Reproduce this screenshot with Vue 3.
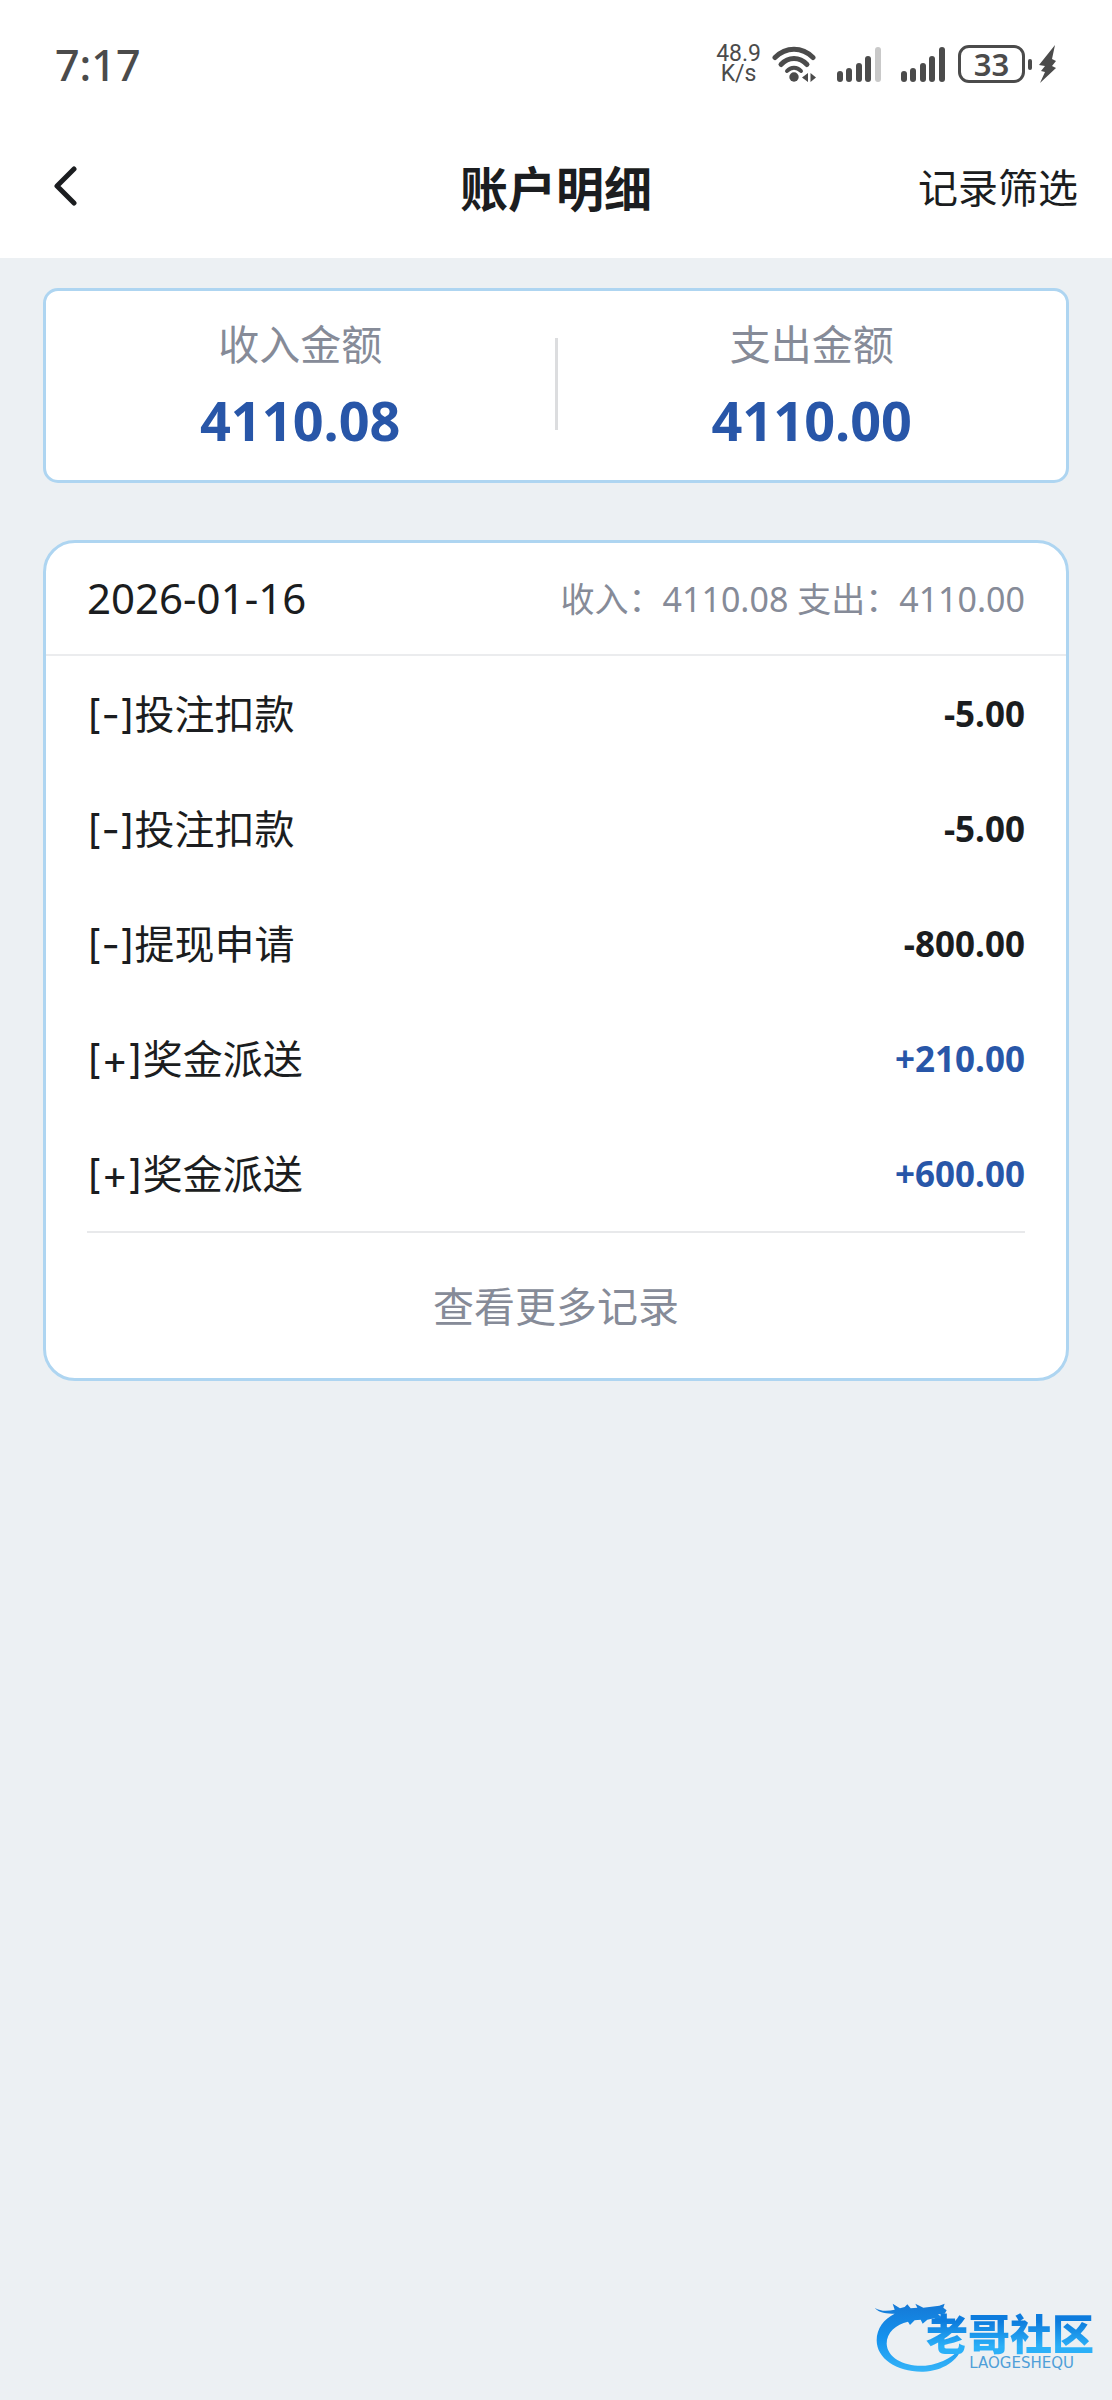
<script setup>
import { ref } from 'vue'

const totals = [
  { label: '收入金额', value: '4110.08' },
  { label: '支出金额', value: '4110.00' },
]

const day = ref({
  date: '2026-01-16',
  income: '4110.08',
  expense: '4110.00',
  records: [
    { id: 1, label: '[-]投注扣款', amount: '-5.00' },
    { id: 2, label: '[-]投注扣款', amount: '-5.00' },
    { id: 3, label: '[-]提现申请', amount: '-800.00' },
    { id: 4, label: '[+]奖金派送', amount: '+210.00' },
    { id: 5, label: '[+]奖金派送', amount: '+600.00' },
  ],
})

const bars = [
  { x: 0, y: 24 },
  { x: 9, y: 21 },
  { x: 19, y: 16 },
  { x: 28, y: 9 },
  { x: 38, y: 0 },
]
const signals = [4, 5]
</script>

<template>
  <div class="page">
    <header class="top">
      <div class="status">
        <span class="clock">7:17</span>
        <div class="indicators">
          <div class="speed"><span>48.9</span><span>K/s</span></div>
          <svg class="wifi" width="45" height="36" viewBox="0 0 45 36" aria-hidden="true">
            <g fill="none" stroke="#4b4b4b" stroke-width="5" stroke-linecap="round">
              <path d="M3 11.500C14 .5 30 .5 41 11.500" />
              <path d="M9 18.500C16.500 10.500 27.500 10.500 35 18.500" />
              <path d="M15 25C19 20.500 25 20.500 29 25" stroke-width="4" />
            </g>
            <circle cx="22" cy="31" r="4.700" fill="#4b4b4b" />
            <path d="M36 27v9l-6-4.500zM38.500 27v9l5.500-4.500z" fill="#4b4b4b" />
          </svg>
          <svg v-for="level in signals" :key="level" class="signal" width="44" height="35" viewBox="0 0 44 35" aria-hidden="true">
            <rect
              v-for="(bar, i) in bars"
              :key="bar.x"
              :x="bar.x"
              :y="bar.y"
              width="6"
              :height="35 - bar.y"
              rx="3"
              :fill="i < level ? '#4b4b4b' : '#c9c9c9'"
            />
          </svg>
          <div class="battery">
            <span class="cell">33</span>
            <span class="nub"></span>
            <svg width="18" height="38" viewBox="0 0 18 38" aria-hidden="true">
              <path d="M16 0L0 20l6 1-4 5 4 1-5 11L17 23l-4-2 4-5-4-2z" fill="#4b4b4b" />
            </svg>
          </div>
        </div>
      </div>
      <nav class="nav">
        <button class="back" type="button" aria-label="返回">
          <svg width="24" height="40" viewBox="0 0 24 40" aria-hidden="true">
            <path d="M20 3L3 20l17 17" fill="none" stroke="#1b1d20" stroke-width="5" stroke-linecap="round" stroke-linejoin="round" />
          </svg>
        </button>
        <h1 class="title">账户明细</h1>
        <button class="filter" type="button">记录筛选</button>
      </nav>
    </header>

    <main class="content">
      <section class="totals">
        <div v-for="t in totals" :key="t.label" class="total">
          <span class="total-label">{{ t.label }}</span>
          <strong class="total-value">{{ t.value }}</strong>
        </div>
      </section>

      <section class="day">
        <div class="day-head">
          <h2 class="date">{{ day.date }}</h2>
          <p class="sums">收入：{{ day.income }} 支出：{{ day.expense }}</p>
        </div>
        <ul class="records">
          <li v-for="r in day.records" :key="r.id" class="record">
            <span class="record-label">{{ r.label }}</span>
            <strong class="amount" :class="{ plus: r.amount.startsWith('+') }">{{ r.amount }}</strong>
          </li>
        </ul>
        <button class="more" type="button">查看更多记录</button>
      </section>
    </main>

    <div class="brand">
      <svg class="dragon" width="90" height="70" viewBox="0 0 270 210" aria-hidden="true">
        <defs>
          <linearGradient id="brandBlue" x1="0" y1="0" x2="0" y2="1">
            <stop offset="0" stop-color="#1579d6" />
            <stop offset="0.5" stop-color="#1492ee" />
            <stop offset="1" stop-color="#35b4f8" />
          </linearGradient>
        </defs>
        <path
          d="M2 14C20 26 42 24 62 20L56 2L78 16L92 12L100 4L110 16L130 14L124 2L148 14L196 8L212 2L208 14L218 22L212 32L192 34L210 48L200 56L180 46L160 50L146 62L140 50L122 52L108 66L102 56C66 64 38 88 38 122C40 166 94 192 154 188C208 182 244 156 266 128C254 172 206 204 148 206C70 208 8 168 8 112C8 76 30 48 62 32C40 32 14 30 2 14Z"
          fill="url(#brandBlue)"
        />
      </svg>
      <div class="brand-text">
        <span class="brand-name">老哥社区</span>
        <span class="brand-latin">LAOGESHEQU</span>
      </div>
    </div>
  </div>
</template>

<style>
body {
  margin: 0;
  background: #ecf0f3;
}
</style>

<style scoped>
.page {
  position: relative;
  min-height: 100vh;
  background: #ecf0f3;
  color: #1b1d20;
  font-family: "Noto Sans", "Noto Sans CJK SC", sans-serif;
}
button {
  padding: 0;
  border: 0;
  background: none;
  color: inherit;
  font: inherit;
  cursor: pointer;
}
h1, h2, p, ul {
  margin: 0;
  padding: 0;
}
.top {
  background: #fff;
}
.status {
  display: flex;
  align-items: center;
  justify-content: space-between;
  box-sizing: border-box;
  height: 116px;
  padding: 12px 55px 0;
  color: #4b4b4b;
}
.clock {
  font-size: 43px;
  font-weight: 500;
}
.indicators {
  display: flex;
  align-items: center;
}
.speed {
  display: flex;
  flex-direction: column;
  align-items: center;
  margin-right: 11px;
  font-family: Roboto, sans-serif;
  font-size: 23px;
  line-height: 20px;
}
.signal {
  margin-left: 20px;
}
.battery {
  display: flex;
  align-items: center;
  gap: 3px;
  margin-left: 13px;
}
.cell {
  box-sizing: border-box;
  width: 67px;
  height: 38px;
  border: 3px solid #4b4b4b;
  border-radius: 11px;
  font-size: 31px;
  font-weight: 600;
  line-height: 32px;
  text-align: center;
}
.nub {
  width: 4px;
  height: 11px;
  margin-right: 4px;
  border-radius: 2px;
  background: #4b4b4b;
}
.nav {
  display: grid;
  grid-template-columns: 1fr auto 1fr;
  align-items: center;
  box-sizing: border-box;
  height: 142px;
  padding: 0 34px 3px;
}
.back {
  display: flex;
  justify-self: start;
  padding-left: 20px;
}
.title {
  font-size: 48px;
  font-weight: 700;
}
.filter {
  justify-self: end;
  font-size: 40px;
}
.content {
  display: flex;
  flex-direction: column;
  gap: 57px;
  padding: 30px 43px;
}
.totals,
.day {
  border: 3px solid #aed5f1;
  background: #fff;
}
.totals {
  display: flex;
  align-items: center;
  border-radius: 15px;
  padding: 16px 0 20px;
}
.total {
  display: flex;
  flex: 1;
  flex-direction: column;
  align-items: center;
}
.totals::before {
  content: "";
  order: 1;
  width: 3px;
  height: 92px;
  background: #dcdddf;
}
.total + .total {
  order: 2;
}
.total-label {
  color: #868b98;
  font-size: 41px;
  line-height: 74px;
}
.total-value {
  color: #2856a8;
  font-size: 54px;
  line-height: 79px;
}
.day {
  border-radius: 32px;
}
.day-head {
  display: flex;
  align-items: center;
  justify-content: space-between;
  box-sizing: border-box;
  height: 113px;
  padding: 0 41px 2px;
  border-bottom: 2px solid #ebecee;
}
.date {
  font-size: 42px;
  font-weight: 400;
}
.sums {
  color: #868b98;
  font-size: 34px;
}
.records {
  margin: 0 41px;
  border-bottom: 2px solid #e8e9eb;
  list-style: none;
}
.record {
  display: flex;
  align-items: center;
  justify-content: space-between;
  height: 115px;
}
.record-label {
  padding-bottom: 3px;
  font-family: Inter, "Noto Sans CJK SC", sans-serif;
  font-size: 40px;
}
.amount {
  font-size: 35px;
}
.amount.plus {
  color: #2856a8;
}
.more {
  display: block;
  width: 100%;
  height: 145px;
  padding-bottom: 3px;
  color: #868b98;
  font-size: 41px;
}
.brand {
  position: absolute;
  right: 18px;
  bottom: 27px;
  display: flex;
  align-items: flex-end;
}
.brand-text {
  display: flex;
  flex-direction: column;
  align-items: flex-end;
  margin-left: -38px;
  padding-bottom: 2px;
}
.brand-name {
  background: linear-gradient(#0d7cdd 20%, #2bb0f8 80%);
  background-clip: text;
  color: transparent;
  font-size: 42px;
  font-weight: 900;
  line-height: 42px;
}
.brand-latin {
  padding-right: 20px;
  color: #4f9fd8;
  font-family: "DejaVu Sans", sans-serif;
  font-size: 15px;
  line-height: 16px;
}
</style>
